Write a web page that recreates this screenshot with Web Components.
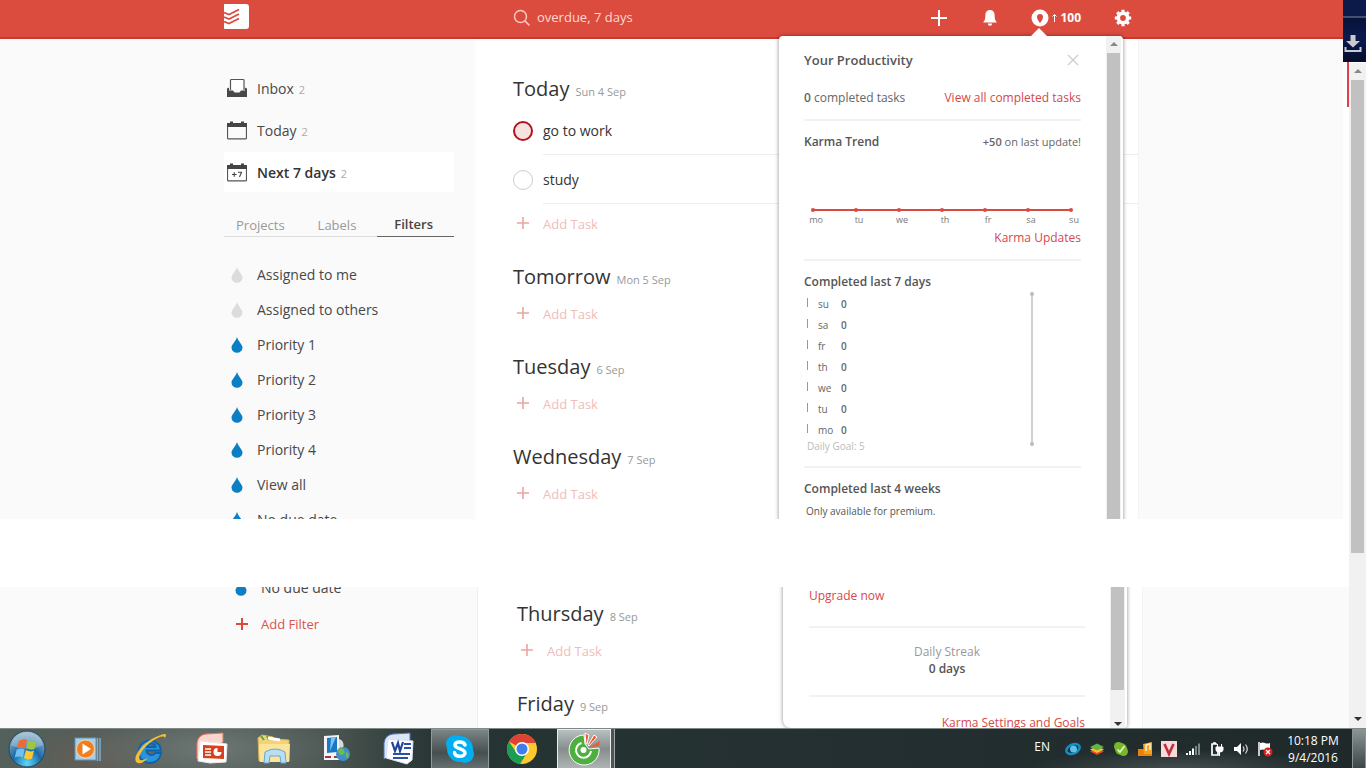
<!DOCTYPE html>
<html lang="en">
<head>
<meta charset="utf-8">
<title>Next 7 days</title>
<style>
  body { margin: 0; font-family: "Open Sans", "Noto Sans", sans-serif; color: #484848; background: #fff; }
</style>
</head>
<body>
<app-desktop></app-desktop>
<script>
const ICONS = {
  logo: ['0 0 25 25', `<path d="M0 0H22a3 3 0 0 1 3 3V22a3 3 0 0 1-3 3H1a1 1 0 0 1-1-1Z" fill="#fff"/><path d="M0 8.500 5 10.500 15 5.500M0 13 5 15 15 10M0 17.500 5 19.500 15 14.500" fill="none" stroke="#db4c3f" stroke-width="1.800"/>`],
  search: ['0 0 18 18', `<circle cx="7.500" cy="7.500" r="6" fill="none" stroke="#f8c9c0" stroke-width="1.500"/><path d="m12 12 4.500 4.500" stroke="#f8c9c0" stroke-width="1.700"/>`],
  plusW: ['0 0 18 18', `<path d="M9 1V17M1 9H17" stroke="#fff" stroke-width="2"/>`],
  bell: ['0 0 16 18', `<path d="M8 1c-3 0-4.600 2.200-4.600 5.200 0 3.800-.8 5.600-2.400 7.300h14c-1.600-1.700-2.400-3.500-2.400-7.300C12.600 3.200 11 1 8 1Z" fill="#fff"/><path d="M5.800 14.500h4.400a2.200 2.200 0 0 1-4.400 0Z" fill="#fff"/>`],
  karma: ['0 0 18 18', `<circle cx="9" cy="9" r="8.500" fill="#fff"/><path d="M9 14C7 11.500 6 9.800 6 8a3 3 0 0 1 6 0c0 1.800-1 3.500-3 6Z" fill="#db4c3f"/>`],
  up: ['0 0 5 10', `<path d="M2.500 9V2M.5 3.500 2.500 1.500 4.500 3.500" stroke="#fff" fill="none"/>`],
  gear: ['0 0 18 18', `<circle cx="9" cy="9" r="4.700" fill="none" stroke="#fff" stroke-width="3.600"/><g stroke="#fff" stroke-width="3.200"><path d="M9 .8V4M9 14V17.200M.8 9H4M14 9H17.200M3.200 3.200 5.400 5.400M12.600 12.600 14.800 14.800M3.200 14.800 5.400 12.600M12.600 5.400 14.800 3.200"/></g>`],
  inbox: ['0 0 20 20', `<path d="M3.500 12V2a1 1 0 0 1 1-.5H16a1 1 0 0 1 1 .5V12" fill="#fff" stroke="#555" stroke-width="1.200"/><path d="M0 10.500 2 9.500V12.500H6L7.500 14.500H12.500L14 12.500H18V9.500L20 10.500V19H0Z" fill="#484848"/>`],
  day: ['0 0 20 20', `<path d="M.5 4V18a1 1 0 0 0 1 .8H18.500a1 1 0 0 0 1-.8V4" fill="none" stroke="#555" stroke-width="1.200"/><path d="M0 3H3V1.500H6V3H14V1.500H17V3H20V7H0Z" fill="#444"/>`],
  week: ['0 0 20 20', `<path d="M.5 4V18a1 1 0 0 0 1 .8H18.500a1 1 0 0 0 1-.8V4" fill="none" stroke="#555" stroke-width="1.200"/><path d="M0 3H3V1.500H6V3H14V1.500H17V3H20V7H0Z" fill="#444"/><path d="M5 12.500H9.500M7.250 10.250V14.750M11 10.200H14.500L12.500 15" fill="none" stroke="#444" stroke-width="1.100"/>`],
  dropG: ['0 0 12 18', `<path d="M6 1C5 5 .5 8.500.5 11.500a5.500 5.300 0 0 0 11 0C11.500 8.500 7 5 6 1Z" fill="#dcdcdc"/>`],
  dropB: ['0 0 12 18', `<path d="M6 1C5 5 .5 8.500.5 11.500a5.500 5.300 0 0 0 11 0C11.500 8.500 7 5 6 1Z" fill="#0a7fc6"/>`],
  plusR: ['0 0 14 14', `<path d="M7 1V13M1 7H13" stroke="#d94a3d" stroke-width="2"/>`],
  plusP: ['0 0 14 14', `<path d="M7 1V13M1 7H13" stroke="#eba59e" stroke-width="1.600"/>`],
  close: ['0 0 12 12', `<path d="m1 1 10 10M11 1 1 11" stroke="#ccc" stroke-width="1.200"/>`],
  download: ['0 0 18 18', `<path d="M6.500 0h5V6H16L9 12.500 2 6H6.500Z" fill="#c9c9d1"/><path d="M1.500 12V16H16.500V12" fill="none" stroke="#c9c9d1" stroke-width="2"/>`],
  start: ['0 0 38 38', `<defs><radialGradient id="o" cx=".5" cy=".9" r=".9"><stop offset="0" stop-color="#5fd8f8"/><stop offset=".45" stop-color="#1b6aa9"/><stop offset="1" stop-color="#a7bfcc"/></radialGradient></defs><circle cx="19" cy="19" r="18" fill="url(#o)" stroke="#23465c"/><path d="M3 15A16.500 16.500 0 0 1 35 15Q19 23 3 15Z" fill="#cfe2ec" opacity=".35"/><path d="M11 11q4-3 8-1l-2 8q-4-2-8 0Z" fill="#ef6a30"/><path d="M20.500 11q4 2 8 0l-2 8q-4 2-8-1Z" fill="#9cc83c"/><path d="M8.700 19.500q4-2 8 0l-2 8q-4-2-8 0Z" fill="#6fc1ee"/><path d="M18 20q4 2.500 8 .5l-2 8q-4 2-8-.5Z" fill="#fbc931"/>`],
  media: ['0 0 28 28', `<rect x="1" y="3" width="21" height="22" fill="#a8cfe7" stroke="#5d95bd"/><path d="M23.500 3V26M26 3V26" stroke="#77b0d6" stroke-width="1.500"/><circle cx="11.500" cy="14" r="9" fill="#ee7e22" stroke="#ffd09a"/><path d="M8.500 8.500 17 14 8.500 19.500Z" fill="#fff"/>`],
  ie: ['0 0 34 34', `<path d="M28 18.500H13.500c.3 4.500 5.800 5.800 8.800 2.500H28A11.200 11.200 0 1 1 28 18.500ZM13.500 15h9c-.5-4.800-8-4.800-9 0Z" fill="#2a93dc" stroke="#1163a8" stroke-width="2"/><path d="M5 31C-3 29 8 8 31 2c3 0 2 2 1 4-1-3-7-1-14 4C10 16 4 25 7 28c2 1 5-.5 8-2-4 4-7 6-10 5Z" fill="#f4bf35"/>`],
  ppt: ['0 0 34 34', `<path d="M2 27V11Q3 3 11 2L28 1V10" fill="#f9d5cb" stroke="#e5745d"/><path d="m3 29 2-20 27 3-1 18-16 1Z" fill="#fff" stroke="#f0e6e3"/><path d="m8 13 21 1v13l-21-1Z" fill="#d9411e"/><path d="M10 17h6M10 20h6M10 23h6" stroke="#fff" stroke-width="1.400"/><path d="M22.500 20V16a4 4 0 1 0 4 4Z" fill="#fff"/>`],
  folder: ['0 0 36 34', `<path d="M2 6 6 3 17 5V7L33 8V29H3Z" fill="#f4d277" stroke="#d9b254"/><path d="m5 4 3 4m3-4 2 4" stroke="#5aa646" stroke-width="2"/><path d="M12 6 24 8" stroke="#fff" stroke-width="3"/><path d="M3 12H34L33 30H4Z" fill="#fbe59a"/><path d="M8 31 9 20Q19 14 29 20L30 31H25L24 24H14L13 31Z" fill="#b9def4" stroke="#6aa7d1"/>`],
  network: ['0 0 30 34', `<path d="m3 4 15-1v25H3Z" fill="#f4f4f4"/><path d="m6 6 10-1v15l-10 1Z" fill="#1a78c8"/><path d="m10 6 5-1-6 14Z" fill="#7cc6f5"/><path d="M4 25h6M13 25h3" stroke="#a33" stroke-width="2"/><path d="M18 7c7 2 5 12 0 13Z" fill="#dadada"/><circle cx="22" cy="22" r="7" fill="#3f8fcf"/><path d="M17 18q4-4 6 0t-2 5q-4 0-4-5m8 2q4 1 2 6-3 0-2-6" fill="#6dbb4f"/>`],
  word: ['0 0 32 34', `<path d="M2 27V11Q3 3 11 2L28 1V10" fill="#dbe6fb" stroke="#4c72c0"/><path d="m4 26 2-19 25 2-1 19-5 4Z" fill="#fff" stroke="#dbe0ef"/><path d="m10 10 3 9 3-8 2 8 3-9" fill="none" stroke="#24449c" stroke-width="2.200"/><path d="M22 12h7M22 16h7M11 22h17M11 26h15" stroke="#2b50aa" stroke-width="2"/>`],
  skype: ['0 0 32 32', `<circle cx="11" cy="11" r="9" fill="#00aff0"/><circle cx="21" cy="21" r="9" fill="#00aff0"/><circle cx="16" cy="16" r="13" fill="#00aff0"/><path d="M21 12c-1-4-10-4-10 0s10 3.500 10 8-10 4.500-10.500-.5" fill="none" stroke="#fff" stroke-width="3.500" stroke-linecap="round"/>`],
  chrome: ['0 0 32 32', `<circle cx="16" cy="16" r="15" fill="#fdc92f"/><path d="M16 16 3 8.500A15 15 0 0 1 29.500 9.500H16Z" fill="#dd4234"/><path d="M3 8.500A15 15 0 0 0 14 31L21 20 16 16 10 19Z" fill="#1b9e51"/><path d="M16 9.500H29.500" stroke="#dd4234"/><circle cx="16" cy="16" r="7" fill="#fff"/><circle cx="16" cy="16" r="5.500" fill="#3f7ee8"/>`],
  coccoc: ['0 0 34 34', `<path d="M17 3A15 15 0 1 0 32 16L22 17 18 12Z" fill="#4caf3f" stroke="#fff"/><path d="M14.500 11A7.500 7.500 0 1 0 24 19" fill="none" stroke="#fff" stroke-width="2"/><circle cx="16.500" cy="18" r="3" fill="#fff"/><path d="m18 1 4 2-2 9-1 0ZM27 3l3 2-8 9-1-1Z" fill="#f05a35" stroke="#fff"/><path d="m33 9-10 6 9-1Z" fill="#f05a35"/>`],
  tray1: ['0 0 16 16', `<ellipse cx="8" cy="8" rx="7" ry="4.500" transform="rotate(-25 8 8)" fill="none" stroke="#128fc9" stroke-width="2.500"/><circle cx="8.500" cy="8" r="3.500" fill="#5ec1e8"/>`],
  tray2: ['0 0 16 16', `<path d="M1 10.500 8 14 15 10.500 8 7Z" fill="#e9402b"/><path d="M1 8.500 8 12 15 8.500 8 5Z" fill="#f4c42c"/><path d="M1 6 8 9.500 15 6 8 2.500Z" fill="#63b444"/>`],
  tray3: ['0 0 16 16', `<circle cx="5.500" cy="5.500" r="4.500" fill="#77b82a"/><circle cx="8" cy="8" r="6" fill="#77b82a"/><circle cx="10.500" cy="10.500" r="4.500" fill="#77b82a"/><path d="m4.500 8.500 2.500 2.500 4.500-6" fill="none" stroke="#e6f5cf" stroke-width="1.600"/>`],
  tray4: ['0 0 16 16', `<path d="M1 8h14v7H1Z" fill="#e8820c"/><path d="M6 3 15 1v12H7Z" fill="#f6a321"/><path d="M9 10V4L13 3V9" stroke="#fff3cf" fill="none" stroke-width="1.500"/>`],
  tray5: ['0 0 16 16', `<path d="M0 0H16V16H0Z" fill="#f9dada"/><path d="m3.500 3 4.500 10 4.500-10" fill="none" stroke="#bd3038" stroke-width="2.600"/>`],
  tray6: ['0 0 16 16', `<path d="M2 12v2M5 10v4M8 7.500V14" stroke="#fff" stroke-width="2"/><path d="M11 5v9M14 2.500V14" stroke="#7b8585" stroke-width="2"/>`],
  tray7: ['0 0 16 16', `<path d="M8 3H3V14H9V11M4 2H7" fill="none" stroke="#fff" stroke-width="1.700"/><path d="M7 6h7v3q0 2-3.500 2T7 9ZM8.500 6V3M12.500 6V3M10.500 11v4" fill="#fff" stroke="#fff"/>`],
  tray8: ['0 0 16 16', `<path d="M1 6H4L8 2V14L4 10H1Z" fill="#fff"/><path d="M10 5.500q2 2.500 0 5M12.500 3.500q3.500 4.500 0 9" fill="none" stroke="#ddd" stroke-width="1.200"/>`],
  tray9: ['0 0 16 16', `<path d="M2 1V15" stroke="#fff" stroke-width="1.500"/><path d="M3 2q3-1 5 0t5 0V9q-3 1-5 0T3 9Z" fill="#fff"/><circle cx="11" cy="11" r="4.500" fill="#d5201d"/><path d="m9 9 4 4m0-4-4 4" stroke="#fff" stroke-width="1.300"/>`]
};

const define = (name, css, html) => customElements.define(name, class extends HTMLElement {
  constructor() {
    super();
    const attr = key => this.getAttribute(key) || '';
    this.attachShadow({ mode: 'open' }).innerHTML =
      `<style>*{box-sizing:border-box}a{color:inherit;text-decoration:none}button,input{font:inherit;color:inherit;margin:0}button{padding:0;border:0;background:none}${css}</style>`
      + (typeof html === 'function' ? html(attr) : html);
  }
});

define('ui-icon', `:host{display:block;flex:none}svg{display:block}`, a => {
  const [box, body] = ICONS[a('name')];
  const [, , w, h] = box.split(' ');
  return `<svg viewBox="${box}" width="${a('w') || w}" height="${a('h') || h}" aria-hidden="true">${body}</svg>`;
});

define('top-bar', `
  :host{display:grid;grid-template-columns:251px minmax(0,1fr);height:39px;padding:0 211px 0 224px;background:#db4c3f;border-bottom:2px solid #c63a2d;color:#fff}
  .logo{align-self:start;padding-top:4px}
  .bar{display:flex;align-items:center;padding:0 0 2px 38px}
  label{display:flex;align-items:center;gap:6px}
  input{width:200px;border:0;padding:0 0 2px;background:none;font-size:13px;color:#fbd9d3;outline:0}
  .tools{display:flex;align-items:center;margin-left:auto}
  button{display:flex;align-items:center;justify-content:center}
  .karma{gap:3px;font-size:12px;font-weight:700;margin:0 33px 0 33px}
  .bell{margin-left:34px}`, `
  <a class="logo" href="#" aria-label="Home"><ui-icon name="logo"></ui-icon></a>
  <div class="bar">
    <label><ui-icon name="search"></ui-icon><input aria-label="Search" value="overdue, 7 days"></label>
    <div class="tools">
      <button aria-label="Add"><ui-icon name="plusW"></ui-icon></button>
      <button class="bell" aria-label="Notifications"><ui-icon name="bell"></ui-icon></button>
      <button class="karma"><ui-icon name="karma"></ui-icon><ui-icon name="up"></ui-icon><span>100</span></button>
      <button aria-label="Settings"><ui-icon name="gear"></ui-icon></button>
    </div>
  </div>`);

define('nav-item', `
  :host{display:block}
  a{display:grid;grid-template-columns:26px auto 1fr;column-gap:7px;align-items:center;height:40px;font-size:14px;justify-items:start}
  ui-icon{justify-self:center}
  span{font-size:11px;color:#aaa;padding-top:2px;margin-left:-2px}
  :host([active]) a{background:#fff;font-weight:600;color:#333}
  :host([active]) span{font-weight:400}
  :host([filter]) a{height:35px}
  :host([add]) a{height:37px;color:#d9534a;font-size:13px}
  :host([add]) ui-icon{padding-left:2px}`, a =>
  `<a href="#"><ui-icon name="${a('icon')}"></ui-icon><slot></slot>${a('count') && `<span>${a('count')}</span>`}</a>`);

define('side-tabs', `
  :host{display:grid;grid-template-columns:repeat(3,1fr);margin:20px 0 20px;height:25px;border-bottom:1px solid #ddd;font-size:13px;color:#999}
  button{height:25px;padding:0 4px 0 0}
  .on{color:#444;font-weight:600;border-bottom:1px solid #666}`,
  `<button>Projects</button><button>Labels</button><button class="on">Filters</button>`);

define('side-bar', `:host{display:block;padding:29px 21px 0 0}nav{display:grid;gap:2px}`, `
  <nav>
    <nav-item icon="inbox" count="2">Inbox</nav-item>
    <nav-item icon="day" count="2">Today</nav-item>
    <nav-item icon="week" count="2" active>Next 7 days</nav-item>
  </nav>
  <side-tabs></side-tabs>
  ${[['Assigned to me', 'G'], ['Assigned to others', 'G'], ['Priority 1', 'B'], ['Priority 2', 'B'], ['Priority 3', 'B'], ['Priority 4', 'B'], ['View all', 'B'], ['No due date', 'B']]
    .map(([t, c]) => `<nav-item filter icon="drop${c}">${t}</nav-item>`).join('')}`);

define('task-row', `
  :host{display:block;padding-left:30px}
  label{display:flex;align-items:center;height:49px;border-bottom:1px solid #eee;font-size:14px;color:#333}
  input{appearance:none;flex:none;width:20px;height:20px;margin:1px 10px 0 -30px;border:1px solid #ccc;border-radius:50%;background:#fff}
  :host([urgent]) input{border:2px solid #b3131e;background:#f7e2df}`,
  `<label><input type="checkbox"><slot></slot></label>`);

define('day-section', `
  :host{display:block;margin-bottom:16px}
  h2{display:flex;align-items:baseline;gap:6px;margin:0;font-size:20px;line-height:34px;font-weight:400;color:#333}
  small{font-size:11px;line-height:16px;color:#999}
  button{display:flex;align-items:center;gap:13px;height:40px;font-size:13px;color:#f0bdb8;padding-left:3px}
  ui-icon{padding-bottom:2px}`, a => `
  <h2>${a('day')}<small>${a('date')}</small></h2>
  <slot></slot>
  <button><ui-icon name="plusP"></ui-icon>Add Task</button>`);

define('scroll-track', `
  :host{display:flex;flex-direction:column;align-items:center;background:#f1f1f1;overflow:hidden}
  i{display:block;flex:none;height:17px;width:100%;overflow:hidden}
  i::after{content:"";display:block;width:0;margin:6px auto 0;border:4px solid transparent;border-top-width:0;border-bottom-color:#888}
  i.down::after{border-top:4px solid #333;border-bottom-width:0}
  b{display:block;width:13px;background:#c1c1c1}
  .rest{flex:1}`, a => `
  ${a('part') === 'end' ? '' : '<i></i>'}
  <b style="flex:${a('thumb') || '1'}"></b>
  ${a('part') === 'start' ? '' : '<div class="rest"></div><i class="down"></i>'}`);

define('pop-over', `
  :host{display:grid;grid-template-columns:minmax(0,1fr) 15px;width:344px;padding-right:2px;background:#fff;box-shadow:0 0 4px rgba(0,0,0,.45)}
  .body{padding:0 25px}`, a => `<div class="body"><slot></slot></div><scroll-track part="${a('part')}" thumb="${a('thumb')}"></scroll-track>`);

const popText = `
  :host{display:block;font-size:12px;line-height:20px;color:#666}
  h3,p{margin:0;font-size:12px;font-weight:600;color:#555}
  p{font-weight:400}
  a{color:#d5494a}
  hr{height:2px;border:0;margin:11px 0;background:#f2f2f2}
  .row{display:flex;justify-content:space-between}
  b{font-weight:600}`;

const days = ['mo', 'tu', 'we', 'th', 'fr', 'sa', 'su'];
define('productivity-card', popText + `
  .title{align-items:center;padding:12px 0 16px}
  .title h3{font-size:13px;line-height:24px}
  .title button{padding-right:2px}
  svg{display:block}
  text{font-size:9px;fill:#777;text-anchor:middle}
  .note{font-size:11px}
  .end{text-align:right}
  .week{display:grid;grid-template-columns:minmax(0,1fr) 53px;align-items:start;padding-top:1px}
  table{border-collapse:collapse;border-spacing:0;font-size:10px;line-height:16px;justify-self:start}
  td{height:21px;padding:0;vertical-align:middle}
  td:first-child i{display:block;width:1px;height:9px;margin:0 10px 3px 3px;background:#999}
  td:nth-child(2){width:23px}
  td:last-child{font-weight:600}
  .goal{font-size:10px;line-height:12px;color:#bbb;padding-left:3px;margin-bottom:14px}
  .small{font-size:10px;padding:2px 0 0 2px}`, `
  <div class="row title"><h3>Your Productivity</h3><button aria-label="Close"><ui-icon name="close"></ui-icon></button></div>
  <div class="row"><span><b>0</b> completed tasks</span><a href="#">View all completed tasks</a></div>
  <hr>
  <div class="row"><h3>Karma Trend</h3><span class="note"><b>+50</b> on last update!</span></div>
  <svg width="276" height="76"><path d="M9 58H267" stroke="#d94a40" stroke-width="2"/>
    ${days.map((d, i) => `<circle cx="${9 + 43 * i}" cy="58" r="2" fill="#d94a40"/><text x="${12 + 43 * i}" y="71">${d}</text>`).join('')}</svg>
  <p class="end"><a href="#">Karma Updates</a></p>
  <hr>
  <h3>Completed last 7 days</h3>
  <div class="week">
    <table>${[...days].reverse().map(d => `<tr><td><i></i></td><td>${d}</td><td>0</td></tr>`).join('')}</table>
    <svg width="8" height="147" overflow="visible"><path d="M4 1V151" stroke="#d0d0d0" stroke-width="2"/><circle cx="4" cy="1" r="2" fill="#bbb"/><circle cx="4" cy="151" r="2" fill="#bbb"/></svg>
  </div>
  <p class="goal">Daily Goal: 5</p>
  <hr>
  <h3>Completed last 4 weeks</h3>
  <p class="small">Only available for premium.</p>`);

define('streak-card', popText + `
  :host{padding-left:1px}
  .up{line-height:18px;padding-bottom:10px}
  .streak{padding:4px 0 7px;line-height:17px;text-align:center;color:#999}
  .streak p{color:inherit}
  .streak b{display:block;color:#555}
  .end{text-align:right;padding-top:5px}`, `
  <p class="up"><a href="#">Upgrade now</a></p><hr>
  <div class="streak"><p>Daily Streak</p><b>0 days</b></div><hr>
  <p class="end"><a href="#">Karma Settings and Goals</a></p>`);

define('task-item', `
  :host{display:grid;place-items:center;width:62px;height:100%}
  button{display:grid;place-items:center;width:58px;height:40px}
  :host([open]) button{border:1px solid #8e9a9a;background:linear-gradient(#7c8585,#454f50 60%,#667070)}
  :host([front]) button{width:54px;border:1px solid #eceeee;background:linear-gradient(#b9bfbf,#858d8d 50%,#aeb4b4);box-shadow:3px 0 0 #4b5555,4px 0 0 #a0a8a8}`, a =>
  `<button aria-label="${a('label')}"><ui-icon name="${a('icon')}"></ui-icon></button>`);

define('task-bar', `
  :host{display:flex;align-items:center;height:40px;box-sizing:border-box;border-top:1px solid #7f8988;color:#fff;font-size:12px;
    background:radial-gradient(ellipse 130px 40px at 210px 20px,#6e7775,transparent),radial-gradient(ellipse 80px 40px at 90px 30px,#655e56,transparent),radial-gradient(ellipse 150px 20px at 1180px 40px,#454e4e,transparent),linear-gradient(90deg,#53605c,#4c5652 24%,#263433 32%,#232e30 70%,#1f2929)}
  .start{width:57px;display:grid;place-items:center}
  .start button{margin-right:3px}
  .items{display:flex;height:39px}
  .tray{display:flex;align-items:center;margin-left:auto;height:39px}
  .tray span{padding:0 15px 4px 0}
  .icons{display:flex;gap:8px}
  time{width:78px;margin-left:1px;text-align:center;line-height:17px;font-size:12px}
  .peek{width:14px;height:39px;border:1px solid #8b9494;border-bottom:0;background:linear-gradient(#8b9393,#3c4646)}`, `
  <div class="start"><button aria-label="Start"><ui-icon name="start"></ui-icon></button></div>
  <div class="items">${[['media', 'Media Player'], ['ie', 'Internet Explorer'], ['ppt', 'PowerPoint'], ['folder', 'Explorer'], ['network', 'Network'], ['word', 'Word'], ['skype', 'Skype', 'open'], ['chrome', 'Chrome'], ['coccoc', 'Browser', 'open front']]
    .map(([i, l, s]) => `<task-item icon="${i}" label="${l}" ${s || ''}></task-item>`).join('')}</div>
  <div class="tray"><span>EN</span>
    <div class="icons">${[1, 2, 3, 4, 5, 6, 7, 8, 9].map(n => `<ui-icon name="tray${n}"></ui-icon>`).join('')}</div>
    <time>10:18 PM<br>9/4/2016</time>
    <button class="peek" aria-label="Show desktop"></button></div>`);

define('app-desktop', `
  :host{display:grid;grid-template-columns:minmax(0,1fr) 17px;grid-template-rows:minmax(0,519fr) 68px minmax(0,141fr) 40px;height:100vh;overflow:hidden;position:relative}
  .pane{grid-column:1;overflow:hidden;position:relative;background:#fafafa}
  .upper{grid-row:1;margin-right:6px}
  .lower{grid-row:3}
  .cols{display:grid;grid-template-columns:251px minmax(0,1fr);padding:0 204px 0 224px;height:100%}
  .lower .cols{grid-template-columns:249px minmax(0,1fr);padding:0 206px 0 228px}
  main{background:#fff;padding:33px 0 0 38px;border-right:1px solid #f4f4f4}
  .lower main{padding-top:10px;border-left:1px solid #f0f0f0;padding-left:39px}
  .more{margin-top:-17px;padding-right:21px}
  pop-over{position:absolute}
  .upper pop-over{right:220px;top:36px;bottom:-4px;border-radius:4px 4px 0 0}
  .upper::after{content:"";position:absolute;top:28px;right:296px;border:8px solid transparent;border-top:0;border-bottom-color:#fff}
  .lower pop-over{right:222px;top:-4px;bottom:0;border-radius:0 0 4px 8px;padding-top:4px}
  .rail{grid-column:2;grid-row:1/4;padding-top:63px;display:grid}
  .window{position:absolute;top:0;right:0;width:23px;height:62px;box-sizing:border-box;padding:35px 1px 0;background:linear-gradient(#0b1a48 0 16px,#8088a0 17px,#071238 18px,#0a1a4c 60%,#060d2c)}
  .mark{position:absolute;right:17px;top:62px;width:2px;height:45px;background:#d9444a}
  task-bar{grid-column:1/3;grid-row:4}`, `
  <section class="pane upper">
    <top-bar></top-bar>
    <div class="cols"><side-bar></side-bar>
      <main>
        <day-section day="Today" date="Sun 4 Sep"><task-row urgent>go to work</task-row><task-row>study</task-row></day-section>
        <day-section day="Tomorrow" date="Mon 5 Sep"></day-section>
        <day-section day="Tuesday" date="6 Sep"></day-section>
        <day-section day="Wednesday" date="7 Sep"></day-section>
      </main></div>
    <pop-over part="start"><productivity-card></productivity-card></pop-over>
  </section>
  <section class="pane lower">
    <div class="cols">
      <div class="more"><nav-item filter icon="dropB">No due date</nav-item><nav-item add icon="plusR">Add Filter</nav-item></div>
      <main>
        <day-section day="Thursday" date="8 Sep"></day-section>
        <day-section day="Friday" date="9 Sep"></day-section>
      </main></div>
    <pop-over part="end" thumb="4"><streak-card></streak-card></pop-over>
  </section>
  <div class="rail"><scroll-track thumb="3"></scroll-track></div>
  <div class="window"><ui-icon name="download"></ui-icon></div>
  <div class="mark"></div>
  <task-bar></task-bar>`);
</script>
</body>
</html>
